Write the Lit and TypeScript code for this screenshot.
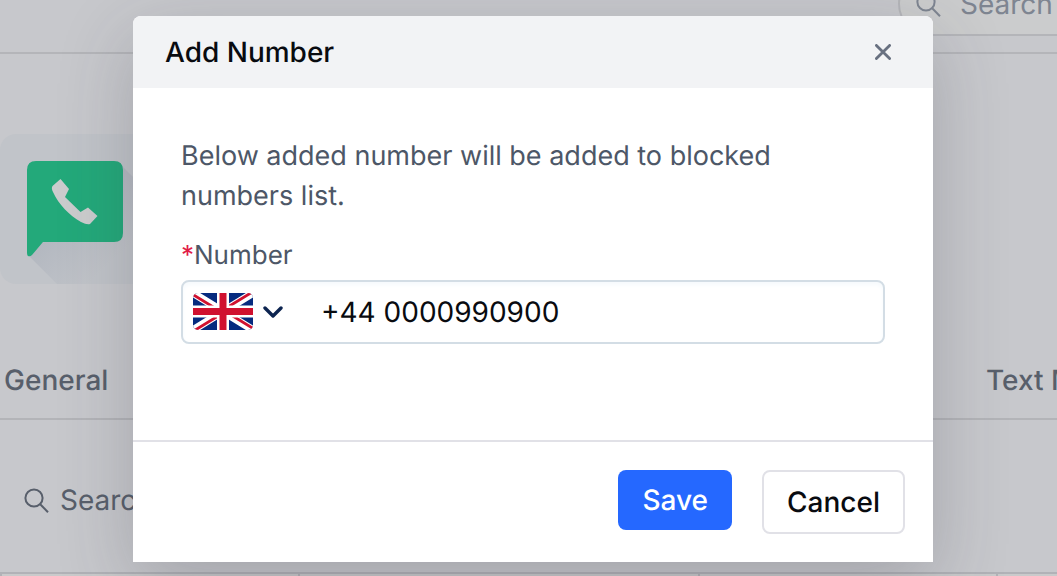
import { LitElement, html, css, svg } from "lit";
import { customElement, state } from "lit/decorators.js";

const searchIcon = svg`
  <circle cx="10" cy="10" r="8.6" />
  <path d="M16.2 16.2 L24 24.2" />
`;

@customElement("settings-page")
export class SettingsPage extends LitElement {
  static styles = css`
    :host {
      display: flex;
      flex-direction: column;
      height: 100%;
      overflow: hidden;
      background: #c7c8cc;
      color: #585f6b;
      font-size: 28px;
      line-height: 40px;
    }
    * {
      box-sizing: border-box;
    }
    .topbar {
      flex: none;
      display: flex;
      justify-content: flex-end;
      align-items: flex-end;
      height: 54px;
      padding-bottom: 16px;
      border-bottom: 2px solid #b4b5b9;
    }
    .search {
      display: flex;
      align-items: center;
      gap: 11px;
    }
    .search svg {
      flex: none;
      width: 25px;
      height: 25px;
      fill: none;
      stroke: currentColor;
      stroke-width: 2;
    }
    .search input {
      flex: 1;
      min-width: 0;
      padding: 0;
      border: 0;
      outline: 0;
      background: none;
      color: inherit;
      font: inherit;
      text-rendering: inherit;
    }
    .search input::placeholder {
      color: inherit;
      opacity: 1;
    }
    .pill {
      flex: none;
      width: 159px;
      height: 64px;
      padding-left: 16px;
      gap: 19px;
      border: 2px solid #b4b5b9;
      border-right: 0;
      border-radius: 32px 0 0 32px;
      background: #cbcccd;
      color: #7e8591;
    }
    .brand {
      flex: none;
      height: 226px;
      margin-top: 80px;
    }
    .brand svg {
      display: block;
      width: 150px;
      height: 150px;
    }
    .tabs {
      flex: none;
      display: grid;
      grid-template-columns: 1fr 71px;
      height: 60px;
      padding-left: 4px;
      border-bottom: 2px solid #b3b4b8;
      font-weight: 500;
      white-space: nowrap;
    }
    .tabs a {
      color: inherit;
      text-decoration: none;
    }
    .filter {
      flex: none;
      height: 152px;
      padding: 8px 24px 0;
    }
    .columns {
      flex: 1;
      display: grid;
      grid-template-columns: 296px 398px 296px 1fr;
      gap: 2px;
      padding: 2px 0 0 2px;
      background: #b1b2b7;
    }
    .columns div {
      background: #c9cacb;
    }
  `;

  render() {
    return html`
      <header class="topbar">
        <label class="search pill">
          <svg viewBox="0 0 25 25" aria-hidden="true">${searchIcon}</svg>
          <input type="text" placeholder="Search" aria-label="Search" />
        </label>
      </header>
      <div class="brand">
        <svg viewBox="0 0 150 150" aria-hidden="true">
          <defs>
            <linearGradient id="fade" x1="0" y1="0" x2="1" y2="1">
              <stop offset="0.3" stop-color="#b0b5be" />
              <stop offset="0.75" stop-color="#c1c4c9" />
            </linearGradient>
          </defs>
          <rect width="150" height="150" rx="16" fill="#c1c4c9" />
          <path d="M29 122 L57 150 H134 Q150 150 150 134 V60 L121 31 Z" fill="url(#fade)" />
          <path
            d="M36 27 H114 Q123 27 123 36 V99 Q123 108 114 108 H43 L32 121 Q30 123 28 122 Q27 121 27 119 V36 Q27 27 36 27 Z"
            fill="#23a97a"
          />
          <path
            d="M60.500 45 L69 55 L65 63 L80.500 78 L88 73.500 L97.500 82 L90 90 Q87 91 81 88 C69 81 59 71 53 58 Q51 54 52.500 52 Z"
            fill="#cbcccd"
          />
        </svg>
      </div>
      <nav class="tabs">
        <a href="#general">General</a>
        <a href="#text">Text M</a>
      </nav>
      <label class="search filter">
        <svg viewBox="0 0 25 25" aria-hidden="true">${searchIcon}</svg>
        <input type="text" placeholder="Search" aria-label="Search numbers" />
      </label>
      <div class="columns"><div></div><div></div><div></div><div></div></div>
    `;
  }
}

@customElement("number-dialog")
export class NumberDialog extends LitElement {
  static styles = css`
    :host {
      display: flex;
      flex-direction: column;
      flex: 1;
      border-radius: 8px 8px 0 0;
      background: #fff;
      box-shadow: 0 24px 76px rgba(50, 52, 62, 0.24);
      color: #4d5767;
      font-size: 28px;
      line-height: 40px;
    }
    * {
      box-sizing: border-box;
    }
    .head {
      display: flex;
      align-items: center;
      justify-content: space-between;
      height: 72px;
      padding: 0 32px;
      border-radius: 8px 8px 0 0;
      background: #f2f3f5;
    }
    h2 {
      margin: 0;
      color: #090b10;
      font-size: 28px;
      font-weight: 500;
    }
    button {
      font: inherit;
      font-weight: 500;
      text-rendering: inherit;
      cursor: pointer;
    }
    .close {
      display: grid;
      place-items: center;
      width: 36px;
      height: 36px;
      padding: 0;
      border: 0;
      background: none;
      color: #687080;
    }
    .close svg {
      width: 16px;
      height: 16px;
      fill: none;
      stroke: currentColor;
      stroke-width: 2.8;
      stroke-linecap: round;
    }
    .body {
      flex: 1;
      padding: 48px;
    }
    p {
      margin: 0 0 20px;
      font-size: 27px;
    }
    .label {
      display: block;
      margin-bottom: 4px;
      font-size: 26px;
    }
    .required {
      color: #e11d48;
    }
    .field {
      display: flex;
      align-items: center;
      height: 64px;
      padding: 0 10px;
      border: 2px solid #d3dde5;
      border-radius: 8px;
      background: #fff;
      box-shadow: inset 0 3px 4px #f6fafd;
    }
    .country {
      position: relative;
      display: flex;
      align-items: center;
      gap: 10px;
      width: 128px;
    }
    .country select {
      position: absolute;
      inset: 0;
      width: 100%;
      opacity: 0;
      font: inherit;
    }
    .flag {
      width: 60px;
      height: 38px;
    }
    .chevron {
      width: 20px;
      height: 14px;
      fill: none;
      stroke: #0c2450;
      stroke-width: 3.4;
      stroke-linecap: round;
      stroke-linejoin: round;
    }
    .field input {
      flex: 1;
      min-width: 0;
      padding: 0;
      border: 0;
      outline: 0;
      background: none;
      color: #090b10;
      font: inherit;
      text-rendering: inherit;
    }
    .foot {
      display: flex;
      justify-content: flex-end;
      align-items: flex-start;
      gap: 30px;
      height: 122px;
      padding: 28px;
      border-top: 2px solid #e1e1e7;
    }
    .save,
    .cancel {
      padding: 10px 24px;
      border: 0;
      border-radius: 8px;
    }
    .save {
      background: #2568ff;
      color: #fff;
    }
    .cancel {
      padding: 10px 23px;
      border: 2px solid #e1e1e7;
      background: #fff;
      color: #090b10;
    }
  `;

  @state() private number = "+44 0000990900";

  private onInput(e: Event) {
    this.number = (e.target as HTMLInputElement).value;
  }

  render() {
    return html`
      <header class="head">
        <h2>Add Number</h2>
        <button class="close" type="button" aria-label="Close">
          <svg viewBox="0 0 16 16"><path d="M1.400 1.400 L14.600 14.600 M14.600 1.400 L1.400 14.600" /></svg>
        </button>
      </header>
      <div class="body">
        <p>Below added number will be added to blocked numbers list.</p>
        <label class="label" for="number"><span class="required">*</span>Number</label>
        <div class="field">
          <div class="country">
            <svg class="flag" viewBox="0 0 60 38" aria-hidden="true">
              <defs>
                <clipPath id="edge"><rect width="60" height="37" rx="5" /></clipPath>
              </defs>
              <g clip-path="url(#edge)">
                <rect width="60" height="37" fill="#062b7f" />
                <path d="M0 0 L60 37 M60 0 L0 37" stroke="#fff" stroke-width="7.500" />
                <path
                  d="M-1 1 L30 20 M61 -2 L30 17 M30 17 L61 36 M30 20 L-1 39"
                  stroke="#d0112f"
                  stroke-width="2.800"
                />
                <path d="M30 0 V37 M0 18.500 H60" stroke="#fff" stroke-width="12" />
                <path d="M30 0 V37 M0 18.500 H60" stroke="#d0112f" stroke-width="7" />
              </g>
            </svg>
            <svg class="chevron" viewBox="0 0 20 14" aria-hidden="true"><path d="M2 3 L10 11 L18 3" /></svg>
            <select aria-label="Country">
              <option></option>
            </select>
          </div>
          <input id="number" type="tel" .value=${this.number} @input=${this.onInput} />
        </div>
      </div>
      <footer class="foot">
        <button class="save" type="button">Save</button>
        <button class="cancel" type="button">Cancel</button>
      </footer>
    `;
  }
}

@customElement("app-root")
export class AppRoot extends LitElement {
  static styles = css`
    :host {
      position: relative;
      display: block;
      height: 100vh;
      overflow: hidden;
      font-family: Inter, "Liberation Sans", sans-serif;
      text-rendering: geometricPrecision;
    }
    .overlay {
      position: absolute;
      inset: 0;
      display: flex;
      padding: 16px 124px 14px 133px;
    }
  `;

  render() {
    return html`
      <settings-page></settings-page>
      <div class="overlay">
        <number-dialog role="dialog" aria-label="Add Number"></number-dialog>
      </div>
    `;
  }
}
